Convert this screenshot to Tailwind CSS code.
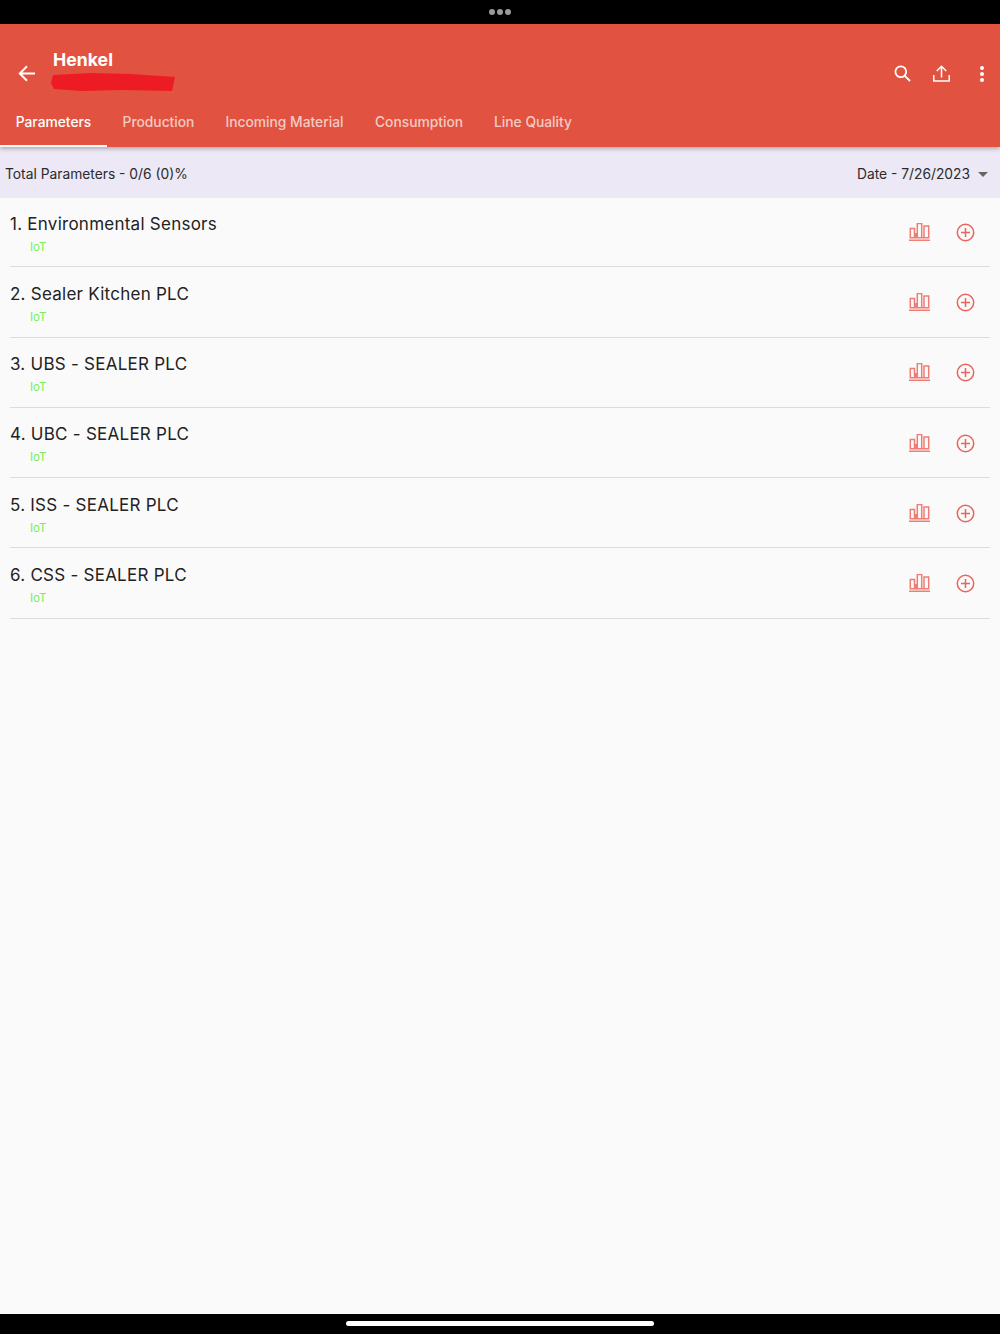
<!DOCTYPE html>
<html lang="en">
<head>
  <meta charset="UTF-8">
  <title>Parameters</title>
  <script src="https://cdn.jsdelivr.net/npm/@tailwindcss/browser@4"></script>
</head>
<body class="font-['Inter',sans-serif] bg-[#fafafa]">
  <div class="flex flex-col h-[1334px] w-[1000px] overflow-hidden">
    <!-- status bar -->
    <div class="h-6 bg-black flex items-center justify-center gap-[2px] pb-[1px] shrink-0">
      <span class="w-[6px] h-[6px] rounded-full bg-[#9a9a9a]"></span>
      <span class="w-[6px] h-[6px] rounded-full bg-[#9a9a9a]"></span>
      <span class="w-[6px] h-[6px] rounded-full bg-[#9a9a9a]"></span>
    </div>

    <!-- app bar -->
    <header class="h-[123px] bg-[#e15340] shrink-0 flex flex-col shadow-[0_2px_4px_rgba(0,0,0,0.25)] z-10">
      <div class="h-[75px] flex items-start">
        <div class="w-[53px] pl-[18px] pt-[41px] shrink-0">
          <svg class="w-[17px] h-[17px] block" viewBox="0 0 17 17" fill="none" stroke="#fff" stroke-width="2"><path d="M17 8.5H2M9 1.2 1.8 8.5 9 15.8"/></svg>
        </div>
        <div class="pt-[25px] flex-1">
          <div class="text-white font-bold text-[17.7px] leading-[21px]">Henkel</div>
          <svg class="block mt-[1px] -ml-[2px]" width="125" height="22" viewBox="0 0 125 22"><path d="M2 4 40 2 80 3 124 6 121 20 70 19 30 20 3 18 0 12Z" fill="#ed1c24"/></svg>
        </div>
        <div class="flex items-center pt-[41px] pr-[16px] shrink-0">
          <svg class="w-[17px] h-[17px] mr-[22px]" viewBox="0 0 17 17" fill="none" stroke="#fff" stroke-width="1.8"><circle cx="6.8" cy="6.8" r="5.4"/><path d="M10.8 10.8 16 16"/></svg>
          <svg class="w-[17px] h-[17px] mr-[30px]" viewBox="0 0 17 17" fill="none" stroke="#fff" stroke-width="1.5"><path d="M.8 10v6h15.4v-6M8.5 12.5V1.5M3.8 6 8.5 1.2 13.2 6"/></svg>
          <div class="flex flex-col gap-[2px]">
            <span class="w-1 h-1 rounded-full bg-white"></span>
            <span class="w-1 h-1 rounded-full bg-white"></span>
            <span class="w-1 h-1 rounded-full bg-white"></span>
          </div>
        </div>
      </div>
      <nav class="h-[48px] flex text-[13.8px] font-medium text-white/70">
        <div class="w-[107px] flex items-start justify-center pt-[15px] leading-[16px] text-white border-b-[2px] border-[#fafafa]">Parameters</div>
        <div class="w-[103px] text-center pt-[15px] leading-[16px]">Production</div>
        <div class="w-[149px] text-center pt-[15px] leading-[16px]">Incoming Material</div>
        <div class="w-[120px] text-center pt-[15px] leading-[16px]">Consumption</div>
        <div class="w-[108px] text-center pt-[15px] leading-[16px]">Line Quality</div>
      </nav>
    </header>

    <!-- summary -->
    <div class="h-[51px] bg-[#ece8f5] shrink-0 flex items-center justify-between pl-[5px] pr-[12px] pt-[4px] text-[13.8px] text-[#2b2b2b]">
      <span>Total Parameters - 0/6 (0)%</span>
      <div class="flex items-center gap-[8px]">
        <span>Date - 7/26/2023</span>
        <span class="w-0 h-0 border-x-[5px] border-x-transparent border-t-[5px] border-t-[#666]"></span>
      </div>
    </div>

    <!-- list -->
    <main class="flex-1 pl-[10px] pr-[10px]">
      <div class="h-[69.3px] border-b border-[#dcdcdc] flex items-start justify-between">
        <div class="pt-[15px]">
          <div class="text-[17px] tracking-[0.25px] leading-[22px] text-[#222]">1. Environmental Sensors</div>
          <div class="pl-[20px] mt-[5.4px] text-[11.5px] leading-[14px] text-[#76ee58]">IoT</div>
        </div>
        <div class="flex items-center gap-[25px] pt-[25px] pr-[15px]">
          <svg class="w-[22px] h-[19px]" viewBox="0 0 22 19" fill="none" stroke="#ee7d75" stroke-width="1.5"><path d="M0 17.3H21M1.3 14.7V5.5H5.5V14.7ZM8.3 14.7V.5H12.7V14.7ZM15 14.7V3H19.7V14.7ZM5.5 14.7H8.3M12.7 14.7H15M7 14.7V10"/></svg>
          <svg class="w-[19px] h-[19px]" viewBox="0 0 19 19" fill="none" stroke="#e8645c" stroke-width="1.5"><circle cx="9.5" cy="9.5" r="8.2"/><path d="M9.5 5V14M5 9.5H14"/></svg>
        </div>
      </div>
      <div class="h-[70.3px] border-b border-[#dcdcdc] flex items-start justify-between">
        <div class="pt-[15.6px]">
          <div class="text-[17px] tracking-[0.25px] leading-[22px] text-[#222]">2. Sealer Kitchen PLC</div>
          <div class="pl-[20px] mt-[4.8px] text-[11.5px] leading-[14px] text-[#76ee58]">IoT</div>
        </div>
        <div class="flex items-center gap-[25px] pt-[25.8px] pr-[15px]">
          <svg class="w-[22px] h-[19px]" viewBox="0 0 22 19" fill="none" stroke="#ee7d75" stroke-width="1.5"><path d="M0 17.3H21M1.3 14.7V5.5H5.5V14.7ZM8.3 14.7V.5H12.7V14.7ZM15 14.7V3H19.7V14.7ZM5.5 14.7H8.3M12.7 14.7H15M7 14.7V10"/></svg>
          <svg class="w-[19px] h-[19px]" viewBox="0 0 19 19" fill="none" stroke="#e8645c" stroke-width="1.5"><circle cx="9.5" cy="9.5" r="8.2"/><path d="M9.5 5V14M5 9.5H14"/></svg>
        </div>
      </div>
      <div class="h-[70.3px] border-b border-[#dcdcdc] flex items-start justify-between">
        <div class="pt-[15.6px]">
          <div class="text-[17px] tracking-[0.25px] leading-[22px] text-[#222]">3. UBS - SEALER PLC</div>
          <div class="pl-[20px] mt-[4.8px] text-[11.5px] leading-[14px] text-[#76ee58]">IoT</div>
        </div>
        <div class="flex items-center gap-[25px] pt-[25.8px] pr-[15px]">
          <svg class="w-[22px] h-[19px]" viewBox="0 0 22 19" fill="none" stroke="#ee7d75" stroke-width="1.5"><path d="M0 17.3H21M1.3 14.7V5.5H5.5V14.7ZM8.3 14.7V.5H12.7V14.7ZM15 14.7V3H19.7V14.7ZM5.5 14.7H8.3M12.7 14.7H15M7 14.7V10"/></svg>
          <svg class="w-[19px] h-[19px]" viewBox="0 0 19 19" fill="none" stroke="#e8645c" stroke-width="1.5"><circle cx="9.5" cy="9.5" r="8.2"/><path d="M9.5 5V14M5 9.5H14"/></svg>
        </div>
      </div>
      <div class="h-[70.3px] border-b border-[#dcdcdc] flex items-start justify-between">
        <div class="pt-[15.6px]">
          <div class="text-[17px] tracking-[0.25px] leading-[22px] text-[#222]">4. UBC - SEALER PLC</div>
          <div class="pl-[20px] mt-[4.8px] text-[11.5px] leading-[14px] text-[#76ee58]">IoT</div>
        </div>
        <div class="flex items-center gap-[25px] pt-[25.8px] pr-[15px]">
          <svg class="w-[22px] h-[19px]" viewBox="0 0 22 19" fill="none" stroke="#ee7d75" stroke-width="1.5"><path d="M0 17.3H21M1.3 14.7V5.5H5.5V14.7ZM8.3 14.7V.5H12.7V14.7ZM15 14.7V3H19.7V14.7ZM5.5 14.7H8.3M12.7 14.7H15M7 14.7V10"/></svg>
          <svg class="w-[19px] h-[19px]" viewBox="0 0 19 19" fill="none" stroke="#e8645c" stroke-width="1.5"><circle cx="9.5" cy="9.5" r="8.2"/><path d="M9.5 5V14M5 9.5H14"/></svg>
        </div>
      </div>
      <div class="h-[70.3px] border-b border-[#dcdcdc] flex items-start justify-between">
        <div class="pt-[15.6px]">
          <div class="text-[17px] tracking-[0.25px] leading-[22px] text-[#222]">5. ISS - SEALER PLC</div>
          <div class="pl-[20px] mt-[4.8px] text-[11.5px] leading-[14px] text-[#76ee58]">IoT</div>
        </div>
        <div class="flex items-center gap-[25px] pt-[25.8px] pr-[15px]">
          <svg class="w-[22px] h-[19px]" viewBox="0 0 22 19" fill="none" stroke="#ee7d75" stroke-width="1.5"><path d="M0 17.3H21M1.3 14.7V5.5H5.5V14.7ZM8.3 14.7V.5H12.7V14.7ZM15 14.7V3H19.7V14.7ZM5.5 14.7H8.3M12.7 14.7H15M7 14.7V10"/></svg>
          <svg class="w-[19px] h-[19px]" viewBox="0 0 19 19" fill="none" stroke="#e8645c" stroke-width="1.5"><circle cx="9.5" cy="9.5" r="8.2"/><path d="M9.5 5V14M5 9.5H14"/></svg>
        </div>
      </div>
      <div class="h-[70.3px] border-b border-[#dcdcdc] flex items-start justify-between">
        <div class="pt-[15.6px]">
          <div class="text-[17px] tracking-[0.25px] leading-[22px] text-[#222]">6. CSS - SEALER PLC</div>
          <div class="pl-[20px] mt-[4.8px] text-[11.5px] leading-[14px] text-[#76ee58]">IoT</div>
        </div>
        <div class="flex items-center gap-[25px] pt-[25.8px] pr-[15px]">
          <svg class="w-[22px] h-[19px]" viewBox="0 0 22 19" fill="none" stroke="#ee7d75" stroke-width="1.5"><path d="M0 17.3H21M1.3 14.7V5.5H5.5V14.7ZM8.3 14.7V.5H12.7V14.7ZM15 14.7V3H19.7V14.7ZM5.5 14.7H8.3M12.7 14.7H15M7 14.7V10"/></svg>
          <svg class="w-[19px] h-[19px]" viewBox="0 0 19 19" fill="none" stroke="#e8645c" stroke-width="1.5"><circle cx="9.5" cy="9.5" r="8.2"/><path d="M9.5 5V14M5 9.5H14"/></svg>
        </div>
      </div>
    </main>

    <!-- home indicator -->
    <div class="h-5 bg-black shrink-0 flex justify-center pt-[7px]">
      <span class="w-[308px] h-[5px] rounded-full bg-white"></span>
    </div>
  </div>
</body>
</html>
